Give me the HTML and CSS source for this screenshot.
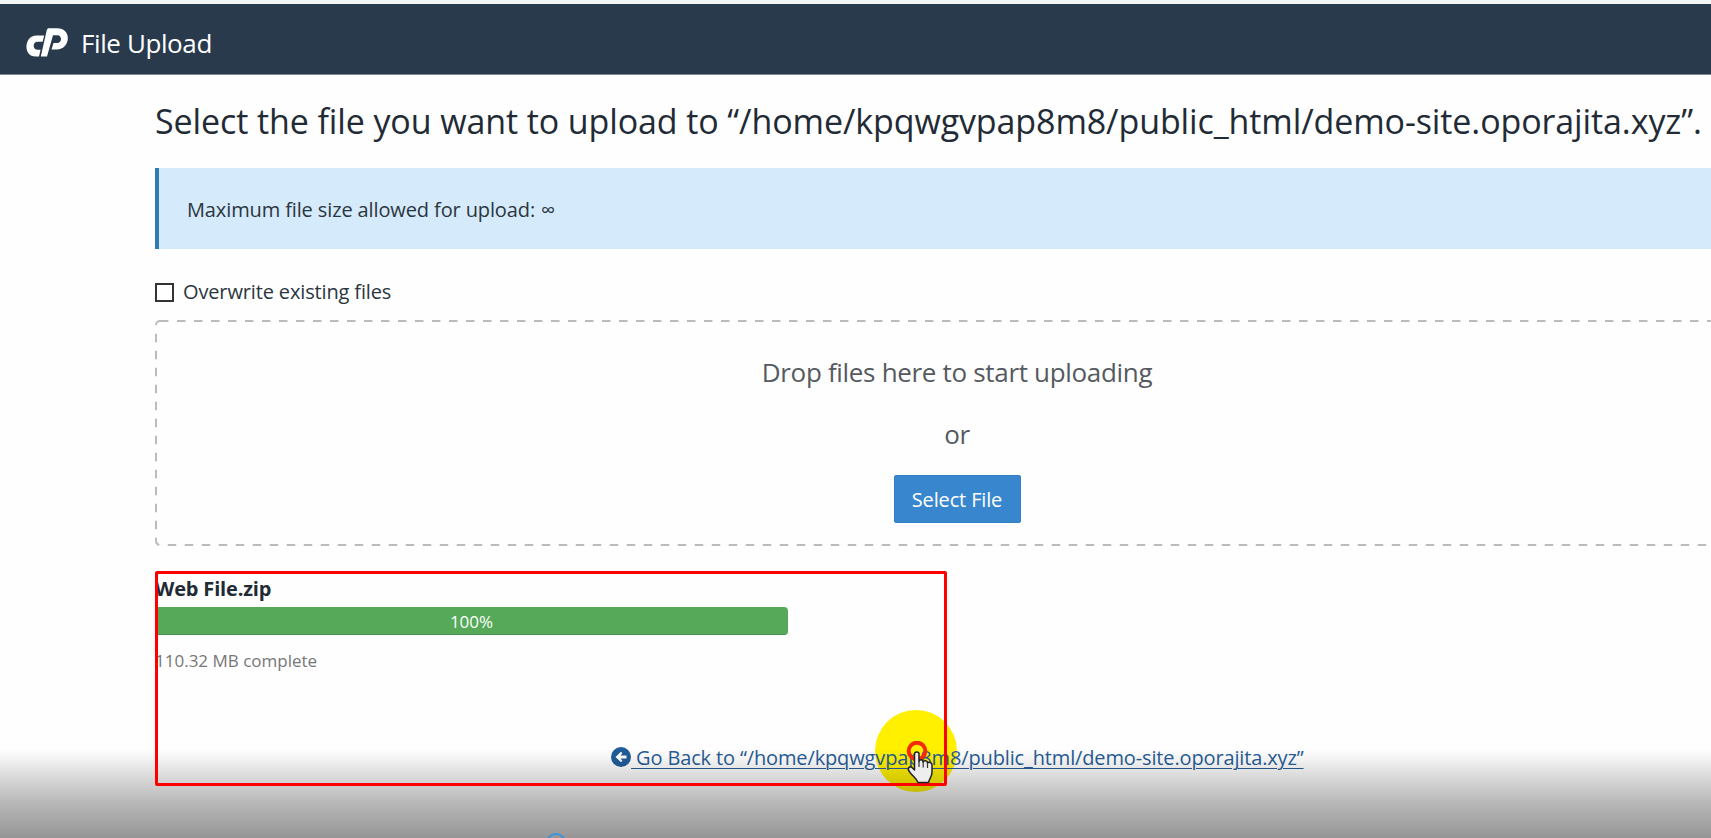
FILE: index.html
```html
<!DOCTYPE html>
<html lang="en">
<head>
<meta charset="utf-8">
<title>File Upload</title>
<link rel="stylesheet" href="styles.css">
</head>
<body>
<header class="topbar">
  <svg class="logo" viewBox="0 0 42 29" width="42" height="29" aria-hidden="true">
    <path fill="#fff" d="M10.500 7.500H18.200L16.600 13.800H11.500C6.500 13.800 6.400 21.700 11.200 21.700H14.600L13 28.500H9.500C-3.500 28.500-2 7.500 10.500 7.500Z"/>
    <path fill="#fff" d="M22.500 .3H31C46.500 .3 44.500 21.500 30.500 21.500H25.500L27.500 15H31C36.300 15 36.200 7.200 31.500 7.200H27L21 28.500H14.800L20.800 2Q21.300 .3 22.500 .3Z"/>
  </svg>
  <span class="topbar-title">File Upload</span>
</header>
<main class="page">
  <h1 class="heading">Select the file you want to upload to “/home/kpqwgvpap8m8/public_html/demo-site.oporajita.xyz”.</h1>
  <div class="alert"><span class="alert-text">Maximum file size allowed for upload:</span><span class="infinity">∞</span></div>
  <label class="overwrite"><span class="checkbox"></span><span class="overwrite-text">Overwrite existing files</span></label>
  <section class="dropzone">
    <svg class="dashes" aria-hidden="true"><rect x="1" y="1" width="1602" height="224" rx="4"/></svg>
    <p class="drop-text">Drop files here to start uploading</p>
    <p class="drop-or">or</p>
    <button class="select-button" type="button">Select File</button>
  </section>
  <section class="upload">
    <div class="file-name">Web File.zip</div>
    <div class="progress"><span>100%</span></div>
    <div class="complete">110.32 MB complete</div>
  </section>
  <div class="highlight"></div>
  <a class="back"><svg class="back-icon" viewBox="0 0 20 20" width="20" height="20" aria-hidden="true"><circle cx="10" cy="10" r="10" fill="#1f5d99"/><path fill="#fff" d="M4.500 10 10 4.800 11.400 6.300 9.600 8.500H15.500V11.500H9.600L11.400 13.700 10 15.200Z"/></svg><span class="back-text">&nbsp;Go Back to “/home/kpqwgvpap8m8/public_html/demo-site.oporajita.xyz”</span></a>
</main>
<div class="shade"></div>
<div class="outline"></div>
<svg class="pointer" viewBox="0 0 30 46" width="30" height="46" aria-hidden="true">
  <circle cx="11" cy="10" r="8.300" fill="none" stroke="#f52b08" stroke-width="4"/>
  <path fill="#eee" stroke="#222" stroke-width="1.500" stroke-linejoin="round" d="M8.500 29V13C8.500 10.200 13 10.200 13 13V20.500C14 17.800 17 18.500 17 21 18 19 21.500 19.500 21.500 22 23 20.500 26 21.500 26 24V31C26 36 23.500 37 22.500 41.500H12C10.500 37 7 35.500 4 31.500L2.500 29C1.500 26.500 4.500 25 6 26.500Z"/>
  <path fill="none" stroke="#333" stroke-width="1.200" d="M13 20.500V26M17.200 21V26.500M21.500 22V27"/>
</svg>
<div class="ring"></div>
</body>
</html>
```
FILE: styles.css
```css
* { box-sizing: border-box; }
body {
  position: relative;
  width: 1711px;
  height: 838px;
  margin: 0;
  overflow: hidden;
  background: #fefefe;
  font-family: "Open Sans", "Noto Sans", sans-serif;
  color: #2b3640;
  white-space: nowrap;
}
.topbar {
  display: flex;
  align-items: center;
  height: 75px;
  padding: 5px 0 0 25px;
  border-top: 4px solid #f3f4f4;
  border-bottom: 1px solid #7d8790;
  background: #293a4d;
}
.logo { flex: none; margin: 1px 13px 0 1px; }
.topbar-title { padding-top: 3px; color: #fff; font-size: 26px; line-height: 36px; letter-spacing: -.4px; }
.page { padding-left: 155px; }
.heading { margin: 21px 0 0; font-size: 34px; line-height: 50px; font-weight: 400; letter-spacing: -.105px; color: #222b35; }
.alert {
  display: flex;
  align-items: center;
  width: 1604px;
  height: 81px;
  margin-top: 22px;
  padding: 2px 0 0 28px;
  border-left: 4px solid #2e7cb0;
  background: #d5eafa;
  font-size: 20px;
  letter-spacing: -.12px;
}
.infinity { margin-left: 6px; }
.overwrite { display: flex; align-items: center; gap: 9px; height: 28px; margin-top: 29px; font-size: 20px; letter-spacing: -.14px; }
.overwrite-text { padding-bottom: 2px; }
.checkbox { width: 19px; height: 19px; border: 2px solid #333; background: #fff; }
.dropzone {
  position: relative;
  display: flex;
  flex-direction: column;
  align-items: center;
  width: 1604px;
  height: 226px;
  margin-top: 14px;
  padding-top: 34px;
  color: #555a60;
  font-size: 26px;
  letter-spacing: -.32px;
}
.dashes { position: absolute; inset: 0; width: 1604px; height: 226px; }
.dashes rect { fill: none; stroke: #bbb; stroke-width: 2; stroke-dasharray: 8.500 8.500; }
.drop-text, .drop-or { margin: 0; line-height: 36px; }
.drop-or { margin-top: 26px; }
.select-button {
  width: 127px;
  height: 48px;
  margin-top: 23px;
  padding: 0;
  border: 1px solid #357fc4;
  border-radius: 2px;
  background: #3886cd;
  color: #fff;
  font: 20px "Open Sans", sans-serif;
  letter-spacing: -.15px;
}
.upload { height: 130px; margin-top: 28px; }
.file-name { height: 33px; font-size: 20px; line-height: 30px; font-weight: 700; letter-spacing: -.16px; color: #222b35; }
.progress {
  display: flex;
  align-items: center;
  justify-content: center;
  width: 633px;
  height: 28px;
  padding-top: 2px;
  border-radius: 4px;
  background: #55a959;
  border-bottom: 1px solid #499150;
  color: #fff;
  font-size: 17px;
}
.complete { margin-top: 12px; font-size: 17px; line-height: 28px; color: #777; }
.back {
  position: relative;
  display: flex;
  align-items: flex-start;
  width: max-content;
  margin: 39px 0 0 456px;
  font-size: 20px;
  line-height: 30px;
  letter-spacing: -.14px;
  color: #285d96;
}
.back-icon { flex: none; margin-top: 4px; }
.back-text { text-decoration: underline; text-decoration-thickness: 1px; text-underline-offset: 3px; }
.highlight { position: absolute; left: 875px; top: 710px; width: 82px; height: 82px; border-radius: 50%; background: #fff000; }
.shade {
  position: absolute;
  left: 0;
  top: 748px;
  width: 1711px;
  height: 90px;
  background: linear-gradient(rgba(0,0,0,0), rgba(0,0,0,.03) 10%, rgba(0,0,0,.11) 25%, rgba(0,0,0,.19) 42%, rgba(0,0,0,.27) 59%, rgba(0,0,0,.41));
}
.outline { position: absolute; left: 155px; top: 571px; width: 792px; height: 215px; border: 3px solid #f00; border-radius: 2px; }
.pointer { position: absolute; left: 906px; top: 741px; }
.ring { position: absolute; left: 546px; top: 833px; width: 20px; height: 20px; border: 2px solid #3b94df; border-radius: 50%; }
```
